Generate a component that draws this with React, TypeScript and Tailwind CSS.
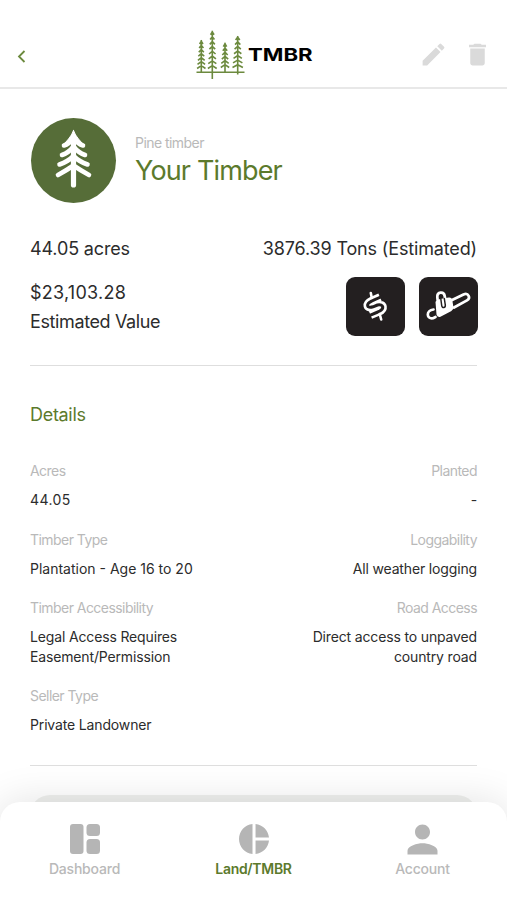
import { clsx } from "clsx";
import type { ReactNode } from "react";
import { MdDelete, MdEdit, MdPerson, MdPieChart } from "react-icons/md";

type Pine = { x: number; top: number; base: number; bottom: number; half: number; rows: number };

const pines: Pine[] = [
  { x: 5.3, top: 10, base: 38.5, bottom: 42, half: 4.2, rows: 7 },
  { x: 16.3, top: 0.7, base: 38.5, bottom: 49, half: 4.4, rows: 8 },
  { x: 29, top: 12.7, base: 37.5, bottom: 42, half: 4.2, rows: 6 },
  { x: 41.7, top: 6, base: 37.5, bottom: 44.5, half: 5.2, rows: 7 },
];

function pinePath({ x, top, base, bottom, half, rows }: Pine) {
  let d = `M${x} ${top}V${bottom}`;
  for (let i = 0; i < rows; i++) {
    const tip = top + 4 + ((base - top - 4) * i) / (rows - 1);
    const w = half * (0.4 + (0.6 * i) / (rows - 1));
    d += `M${x - w} ${tip}L${x} ${tip - 2.8}L${x + w} ${tip}`;
  }
  return d;
}

function Logo() {
  return (
    <div className="-ml-[2px] flex items-center">
      <svg width="50" height="50" viewBox="0 0 50 50" fill="none" stroke="#6c8a3e">
        {pines.map((p) => (
          <path key={p.x} d={pinePath(p)} strokeWidth="1.6" />
        ))}
        <path d="M0.5 42.300H48.500" strokeWidth="1.6" />
      </svg>
      <span className="ml-[2px] w-[64px] origin-left scale-x-[1.23] text-[18px] leading-none font-bold text-black">
        TMBR
      </span>
    </div>
  );
}

function PineBadge() {
  return (
    <div className="size-[85px] shrink-0 rounded-full bg-[#566d38]">
      <svg viewBox="0 0 85 85" fill="none" stroke="#fff" strokeLinecap="round" strokeLinejoin="round">
        <path d="M42.500 18V67" strokeWidth="5.200" />
        <path d="M42.500 12.500Q41 17 37.500 21L34 25H51L47.500 21Q44 17 42.500 12.500Z" fill="#fff" strokeWidth="1" />
        <path
          d="M33 27.500Q38 26 42.500 20Q47 26 52 27.500M31 37Q38 34.500 42.500 28.500Q47 34.500 54 37M28.500 46.500Q37 43.500 42.500 38Q48 43.500 56.500 46.500M27 57Q36 52 42.500 47.500Q49 52 58 57"
          strokeWidth="4.600"
        />
      </svg>
    </div>
  );
}

// the S is a wide white stroke hollowed out by a narrower dark one
const dollarCurve = "L26 23.800C19.500 27 20.500 31.800 27 29.800L31.500 28C38 26.800 38.500 32 33 34.500";

function DollarIcon() {
  return (
    <svg width="59" height="59" viewBox="0 0 59 59" fill="none" stroke="#fff" strokeLinejoin="round">
      <path d={`M34 20.300${dollarCurve}L24.500 38`} strokeWidth="8.200" />
      <path d={`M37 19${dollarCurve}L21.500 39.300`} stroke="#231f20" strokeWidth="3" />
      <path d="M24.800 16L25.800 21M33.700 37L35.200 42.500" strokeWidth="2.600" strokeLinecap="round" />
    </svg>
  );
}

function ChainsawIcon() {
  return (
    <svg width="59" height="59" viewBox="0 0 59 59" fill="none" stroke="#fff" strokeLinecap="round" strokeLinejoin="round">
      <path d="M31 24L44.500 17.500C49.500 15.500 52 21 48 23.300L35 30.500" strokeWidth="2.700" />
      <path d="M17.500 25L21 23L30 21.500Q31.800 21.300 32.200 23L33.500 30.500Q33.500 32 32 33L20.500 39Q19 39 18.500 37.500Z" fill="#fff" strokeWidth="2" />
      <path d="M19 27L18.300 20C18 14.500 25 14 25.700 19L27 27" strokeWidth="2.700" />
      <path d="M21.500 19.500L22.700 28.500C23 31.500 26.700 31 26.300 28L25.300 21.500" stroke="#231f20" strokeWidth="1.500" />
      <path d="M14.500 32.500C6.500 33.500 7.500 42.500 14 41.200L16.500 40" strokeWidth="2.700" />
    </svg>
  );
}

function Tile({ children }: { children: ReactNode }) {
  return <button className="size-[59px] overflow-hidden rounded-[9px] bg-[#231f20]">{children}</button>;
}

function DashboardIcon() {
  return (
    <svg width="30" height="30" viewBox="0 0 30 30" fill="currentColor">
      <rect width="13.500" height="30" rx="3" />
      <rect x="16.500" width="13.500" height="12" rx="3.500" />
      <rect x="16.500" y="15" width="13.500" height="15" rx="3.500" />
    </svg>
  );
}

type FieldProps = { label: string; value: ReactNode; right?: boolean; tracking?: string };

function Field({ label, value, right, tracking = "tracking-[-0.15px]" }: FieldProps) {
  return (
    <div className={clsx("text-[14px] leading-[19.5px]", right && "text-right")}>
      <div className="tracking-[-0.55px] text-[#b9b9b9]">{label}</div>
      <div className={clsx("mt-[9.5px] text-[#2c2c2c]", tracking)}>{value}</div>
    </div>
  );
}

function Tab({ icon, label, active }: { icon: ReactNode; label: string; active?: boolean }) {
  return (
    <a className="flex w-[169px] flex-col items-center">
      <span className="flex size-[30px] items-center justify-center text-[#b5b5b5]">{icon}</span>
      <span
        className={clsx(
          "mt-[5px] text-[14px] leading-[20px]",
          active ? "font-semibold tracking-[-0.3px] text-[#5c7a2c]" : "font-medium tracking-[-0.2px] text-[#b9b9b9]",
        )}
      >
        {label}
      </span>
    </a>
  );
}

export default function App() {
  return (
    <div className="relative h-[900px] w-[507px] overflow-hidden bg-white font-[Inter,sans-serif] text-[#2c2c2c]">
      <header className="flex h-[89px] items-start justify-between border-b-2 border-[#e8e8e8] pt-[30px] pr-[15px] pl-[17px]">
        <div className="flex h-[50px] w-[94px] items-center pt-[3px]">
          <svg width="9" height="13" viewBox="0 0 9 13" fill="none" stroke="#6c8a3e" strokeWidth="1.8">
            <path d="M7.500 1L2 6.500L7.500 12" />
          </svg>
        </div>
        <Logo />
        <div className="flex h-[49px] w-[94px] items-center justify-end gap-[15px] text-[#dadada]">
          <MdEdit size={29} />
          <MdDelete size={29} />
        </div>
      </header>

      <main className="px-[30px]">
        <section className="mt-[29px] flex items-center pl-px">
          <PineBadge />
          <div className="ml-[19px]">
            <div className="text-[14px] leading-[20px] tracking-[-0.55px] text-[#b9b9b9]">Pine timber</div>
            <h1 className="text-[27px] leading-[36px] tracking-[-0.85px] text-[#5c7a2c]">Your Timber</h1>
          </div>
        </section>

        <section className="mt-[31px] border-b border-[#dedede] pb-[29px] text-[18px] leading-[29px]">
          <div className="flex justify-between tracking-[-0.15px]">
            <span>44.05 acres</span>
            <span>3876.39 Tons (Estimated)</span>
          </div>
          <div className="mt-[14px] -mr-px flex items-center justify-between">
            <div className="pt-px">
              <div className="tracking-[0.25px]">$23,103.28</div>
              <div className="tracking-[-0.38px]">Estimated Value</div>
            </div>
            <div className="flex gap-[14px]">
              <Tile>
                <DollarIcon />
              </Tile>
              <Tile>
                <ChainsawIcon />
              </Tile>
            </div>
          </div>
        </section>

        <section className="border-b border-[#dedede] pb-[30px]">
          <h2 className="mt-[35px] text-[18px] leading-[28px] tracking-[-0.3px] text-[#5c7a2c]">Details</h2>
          <div className="mt-[32px] grid grid-cols-2 gap-y-[20px]">
            <Field label="Acres" value="44.05" tracking="tracking-[0.4px]" />
            <Field label="Planted" value="-" right />
            <Field label="Timber Type" value="Plantation - Age 16 to 20" tracking="tracking-normal" />
            <Field label="Loggability" value="All weather logging" right />
            <Field
              label="Timber Accessibility"
              value={
                <>
                  Legal Access Requires
                  <br />
                  Easement/Permission
                </>
              }
            />
            <Field
              label="Road Access"
              value={
                <>
                  Direct access to unpaved
                  <br />
                  country road
                </>
              }
              right
            />
            <Field label="Seller Type" value="Private Landowner" />
          </div>
        </section>

        <div className="mt-[29px] h-[60px] rounded-[20px] bg-[#eff0ee]" />
      </main>

      <nav className="absolute inset-x-0 bottom-0 flex h-[98px] rounded-t-[20px] bg-white pt-[22px] shadow-[0_0_40px_rgba(0,0,0,0.12)]">
        <Tab icon={<DashboardIcon />} label="Dashboard" />
        <Tab icon={<MdPieChart size={36} className="shrink-0" />} label="Land/TMBR" active />
        <Tab icon={<MdPerson size={45} className="shrink-0" />} label="Account" />
      </nav>
    </div>
  );
}
